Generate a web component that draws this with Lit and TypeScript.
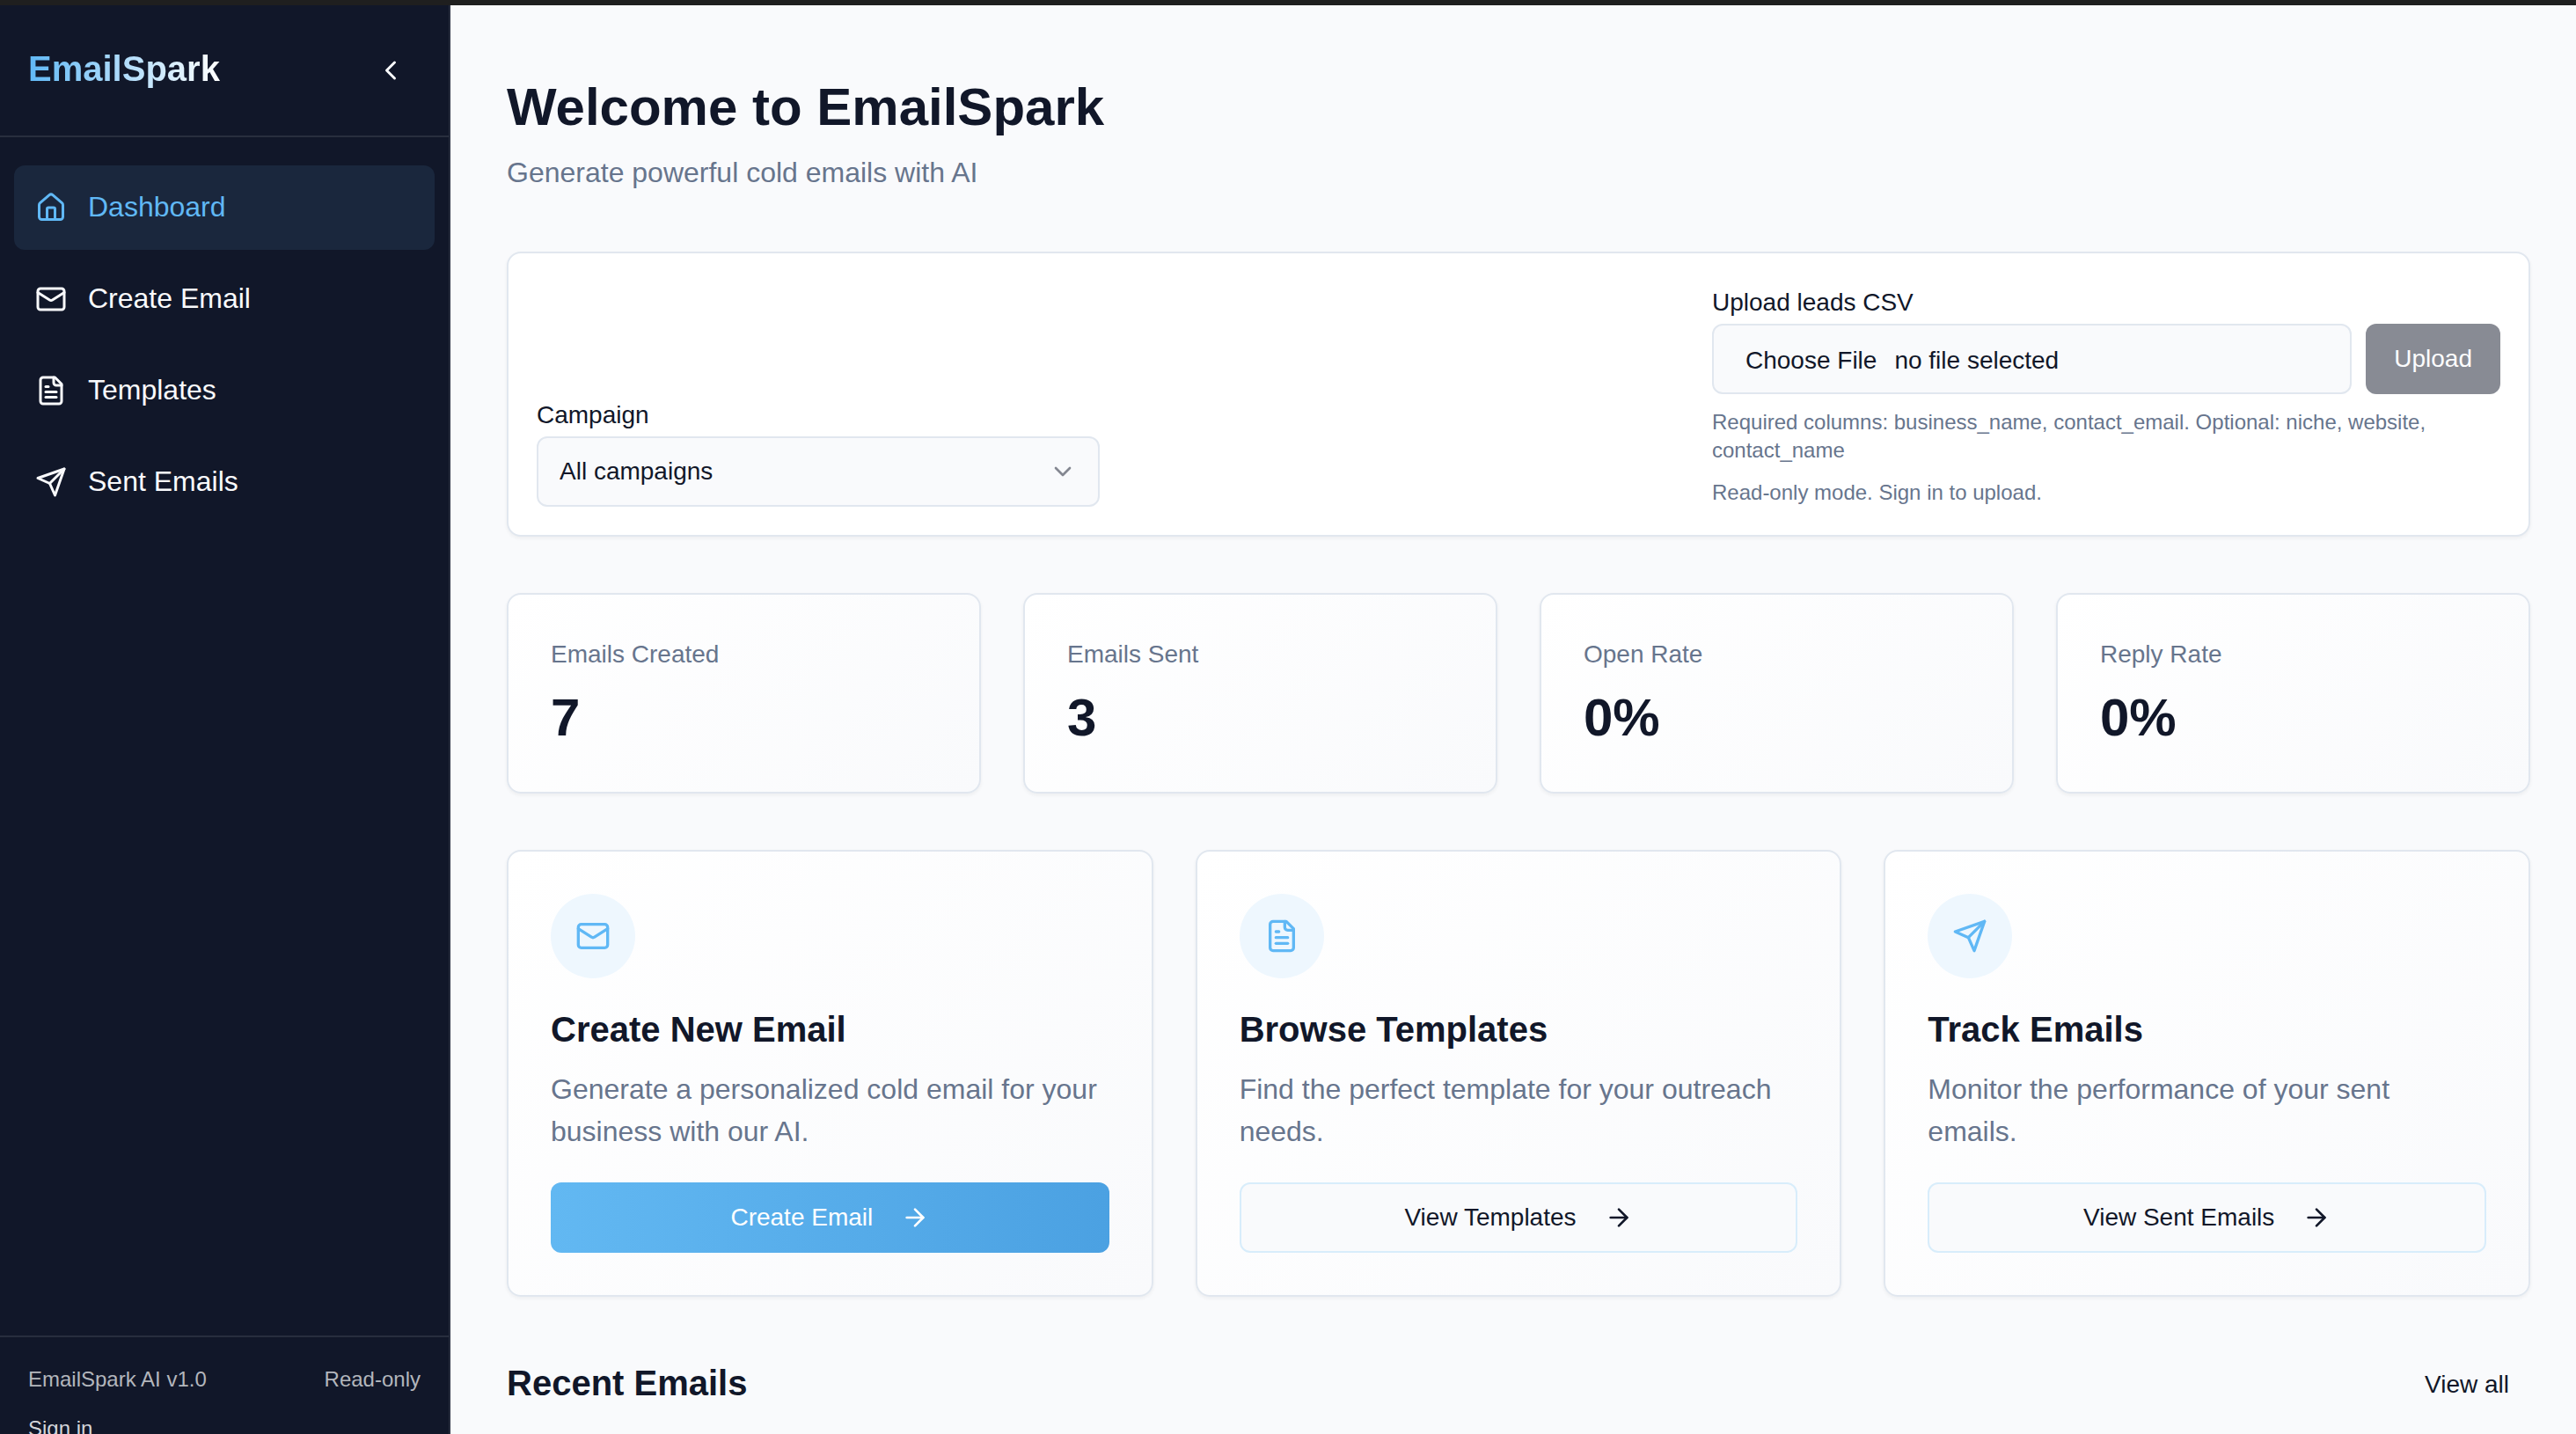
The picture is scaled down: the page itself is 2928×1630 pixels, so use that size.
import { LitElement, html, css, svg } from "lit";
import { customElement, property } from "lit/decorators.js";

type IconName = "home" | "mail" | "file" | "send" | "left" | "down" | "right";

const glyphs = {
  home: svg`<path d="M15 21v-8a1 1 0 0 0-1-1h-4a1 1 0 0 0-1 1v8"/><path d="M3 10a2 2 0 0 1 .709-1.528l7-5.999a2 2 0 0 1 2.582 0l7 5.999A2 2 0 0 1 21 10v9a2 2 0 0 1-2 2H5a2 2 0 0 1-2-2z"/>`,
  mail: svg`<rect width="20" height="16" x="2" y="4" rx="2"/><path d="m22 7-8.97 5.7a1.94 1.94 0 0 1-2.06 0L2 7"/>`,
  file: svg`<path d="M15 2H6a2 2 0 0 0-2 2v16a2 2 0 0 0 2 2h12a2 2 0 0 0 2-2V7Z"/><path d="M14 2v4a2 2 0 0 0 2 2h4"/><path d="M10 9H8"/><path d="M16 13H8"/><path d="M16 17H8"/>`,
  send: svg`<path d="m22 2-7 20-4-9-9-4Z"/><path d="M22 2 11 13"/>`,
  left: svg`<path d="m15 18-6-6 6-6"/>`,
  down: svg`<path d="m6 9 6 6 6-6"/>`,
  right: svg`<path d="M5 12h14"/><path d="m12 5 7 7-7 7"/>`,
};

@customElement("line-icon")
export class LineIcon extends LitElement {
  @property() name: IconName = "home";

  static styles = css`
    :host { display: block; flex: none; width: 36px; height: 36px; }
    .glyph {
      display: block; width: 100%; height: 100%;
      fill: none; stroke: currentColor; stroke-width: 2;
      stroke-linecap: round; stroke-linejoin: round;
    }
  `;

  render() {
    return html`<svg class="glyph" viewBox="0 0 24 24" aria-hidden="true">${glyphs[this.name]}</svg>`;
  }
}

@customElement("side-bar")
export class SideBar extends LitElement {
  static styles = css`
    * { box-sizing: border-box; }
    :host {
      display: flex; flex-direction: column; flex: none;
      box-sizing: border-box; width: 512px;
      background: #111729; color: #f9fafc;
      border-right: 2px solid #282e3e;
    }
    .head {
      display: flex; align-items: center; justify-content: space-between;
      padding: 40px 32px; border-bottom: 2px solid #282e3e;
    }
    .brand {
      padding-bottom: 4px;
      font-size: 40px; line-height: 56px; font-weight: 700;
      background: linear-gradient(90deg, #60b8f5, #ffffff);
      background-clip: text; -webkit-background-clip: text; color: transparent;
    }
    .collapse {
      display: grid; place-items: center; width: 68px; height: 68px;
      padding: 0; border: 0; border-radius: 12px; background: none; color: inherit;
    }
    .nav { flex: 1; display: flex; flex-direction: column; gap: 8px; padding: 32px 16px; }
    .item {
      display: flex; align-items: center; gap: 24px;
      height: 96px; padding: 0 24px; border-radius: 12px;
      font-size: 32px; line-height: 46px; color: inherit; text-decoration: none;
    }
    .label { padding-bottom: 2px; }
    .item.active { background: #1a273d; color: #60b8f5; }
    .foot {
      flex: 0 0 112px; min-height: 0; display: flex; flex-direction: column; gap: 24px;
      padding: 32px 32px 0; border-top: 2px solid #282e3e;
      font-size: 24px; line-height: 32px; color: #b3b6bc;
    }
    .row { display: flex; justify-content: space-between; }
    .sign { color: #d3d5da; text-decoration: none; }
  `;

  private items: { icon: IconName; label: string }[] = [
    { icon: "home", label: "Dashboard" },
    { icon: "mail", label: "Create Email" },
    { icon: "file", label: "Templates" },
    { icon: "send", label: "Sent Emails" },
  ];

  render() {
    return html`
      <div class="head">
        <span class="brand">EmailSpark</span>
        <button class="collapse" aria-label="Collapse sidebar"><line-icon name="left"></line-icon></button>
      </div>
      <nav class="nav">
        ${this.items.map(
          (it, i) => html`<a href="#" class="item ${i === 0 ? "active" : ""}">
            <line-icon name=${it.icon}></line-icon><span class="label">${it.label}</span>
          </a>`
        )}
      </nav>
      <div class="foot">
        <div class="row"><span>EmailSpark AI v1.0</span><span>Read-only</span></div>
        <a class="sign" href="#">Sign in</a>
      </div>
    `;
  }
}

@customElement("app-root")
export class AppRoot extends LitElement {
  static styles = css`
    * { box-sizing: border-box; }
    :host {
      display: flex; flex-direction: column; height: 100vh; overflow: hidden;
      border-top: 6px solid #1f1f1f; box-sizing: border-box;
      font-family: "Liberation Sans", Arial, sans-serif; color: #111729; background: #f9fafc;
    }
    h1, h2, h3, p { margin: 0; }
    button, select, input { font: inherit; color: inherit; }
    .shell { flex: 1; min-height: 0; display: flex; }
    .main {
      flex: 1; min-width: 0; overflow: hidden;
      display: flex; flex-direction: column; gap: 64px;
      padding: 80px 52px 0 64px;
    }
    .intro { display: flex; flex-direction: column; gap: 14px; padding-bottom: 2px; }
    .title { font-size: 60px; line-height: 72px; font-weight: 700; }
    .lead { font-size: 32px; line-height: 48px; color: #67758d; }
    .card {
      border: 2px solid #e1e7ef; border-radius: 16px; background: #ffffff;
      box-shadow: 0 2px 4px rgba(0, 0, 0, 0.05);
    }
    .tools {
      display: flex; align-items: flex-end; justify-content: space-between; gap: 32px;
      padding: 32px; font-size: 28px; line-height: 48px;
    }
    .field { display: block; }
    .campaign { width: 640px; }
    .upload { width: 896px; }
    .select-box { display: grid; align-items: center; }
    .select {
      grid-area: 1 / 1; appearance: none; width: 100%; height: 80px; padding: 0 24px;
      border: 2px solid #e1e7ef; border-radius: 12px; background: #f9fafc; line-height: 40px;
    }
    .select-box line-icon {
      grid-area: 1 / 1; justify-self: end; width: 32px; height: 32px;
      margin-right: 26px; opacity: 0.5; pointer-events: none;
    }
    .upload-row { display: flex; gap: 16px; }
    .file-box {
      position: relative; flex: 1; display: flex; align-items: center; gap: 20px;
      height: 80px; padding: 4px 36px 0; line-height: 40px;
      border: 2px solid #e1e7ef; border-radius: 12px; background: #f9fafc;
    }
    .file-input { position: absolute; inset: 0; width: 100%; height: 100%; opacity: 0; }
    .upload-btn {
      height: 80px; padding: 0 32px; border: 0; border-radius: 12px;
      background: #888b94; color: #fcfcfd; line-height: 40px;
    }
    .hint { margin-top: 16px; font-size: 24px; line-height: 32px; color: #67758d; }
    .stats { display: grid; grid-template-columns: repeat(4, minmax(0, 1fr)); gap: 48px; }
    .soft { padding: 48px; background: linear-gradient(135deg, #ffffff, #f9fafc); }
    .stat { display: flex; flex-direction: column; gap: 16px; }
    .stat-label { font-size: 28px; line-height: 40px; color: #67758d; }
    .stat-value { font-size: 60px; line-height: 72px; font-weight: 700; }
    .actions { display: grid; grid-template-columns: repeat(3, minmax(0, 1fr)); gap: 48px; }
    .action { display: flex; flex-direction: column; }
    .badge {
      display: grid; place-items: center; width: 96px; height: 96px; margin-bottom: 30px;
      border-radius: 50%; background: #eef7fe; color: #60b8f5;
    }
    .badge line-icon { width: 40px; height: 40px; }
    .heading { font-size: 40px; line-height: 56px; font-weight: 700; }
    .text { margin: 16px 0 34px; font-size: 32px; line-height: 48px; color: #67758d; }
    .btn {
      display: flex; align-items: center; justify-content: center; gap: 32px;
      height: 80px; border: 2px solid #d8edfb; border-radius: 12px; background: #f9fafc;
      font-size: 28px; line-height: 40px; color: inherit; text-decoration: none;
    }
    .btn.primary { border: 0; background: linear-gradient(90deg, #62b8f2, #4ba1e2); color: #ffffff; }
    .btn line-icon { width: 32px; height: 32px; }
    .recent { display: flex; align-items: center; justify-content: space-between; }
    .recent .heading { padding-bottom: 4px; }
    .view-all {
      padding: 16px 24px; font-size: 28px; line-height: 40px; color: inherit; text-decoration: none;
    }
  `;

  private stats = [
    ["Emails Created", "7"],
    ["Emails Sent", "3"],
    ["Open Rate", "0%"],
    ["Reply Rate", "0%"],
  ];

  private actions: { icon: IconName; title: string; text: string; cta: string }[] = [
    { icon: "mail", title: "Create New Email", text: "Generate a personalized cold email for your business with our AI.", cta: "Create Email" },
    { icon: "file", title: "Browse Templates", text: "Find the perfect template for your outreach needs.", cta: "View Templates" },
    { icon: "send", title: "Track Emails", text: "Monitor the performance of your sent emails.", cta: "View Sent Emails" },
  ];

  render() {
    return html`
      <div class="shell">
        <side-bar></side-bar>
        <main class="main">
          <header class="intro">
            <h1 class="title">Welcome to EmailSpark</h1>
            <p class="lead">Generate powerful cold emails with AI</p>
          </header>

          <section class="card tools">
            <div class="campaign">
              <label class="field" for="campaign">Campaign</label>
              <div class="select-box">
                <select class="select" id="campaign"><option>All campaigns</option></select>
                <line-icon name="down"></line-icon>
              </div>
            </div>
            <div class="upload">
              <label class="field" for="leads">Upload leads CSV</label>
              <div class="upload-row">
                <div class="file-box">
                  <span>Choose File</span><span>no file selected</span>
                  <input class="file-input" id="leads" type="file" accept=".csv" />
                </div>
                <button class="upload-btn" disabled>Upload</button>
              </div>
              <p class="hint">Required columns: business_name, contact_email. Optional: niche, website, contact_name</p>
              <p class="hint">Read-only mode. Sign in to upload.</p>
            </div>
          </section>

          <section class="stats">
            ${this.stats.map(
              ([label, value]) => html`<div class="card soft stat">
                <p class="stat-label">${label}</p>
                <p class="stat-value">${value}</p>
              </div>`
            )}
          </section>

          <section class="actions">
            ${this.actions.map(
              (a, i) => html`<article class="card soft action">
                <div class="badge"><line-icon name=${a.icon}></line-icon></div>
                <h3 class="heading">${a.title}</h3>
                <p class="text">${a.text}</p>
                <a href="#" class="btn ${i === 0 ? "primary" : ""}">
                  <span>${a.cta}</span><line-icon name="right"></line-icon>
                </a>
              </article>`
            )}
          </section>

          <section class="recent">
            <h2 class="heading">Recent Emails</h2>
            <a class="view-all" href="#">View all</a>
          </section>
        </main>
      </div>
    `;
  }
}
